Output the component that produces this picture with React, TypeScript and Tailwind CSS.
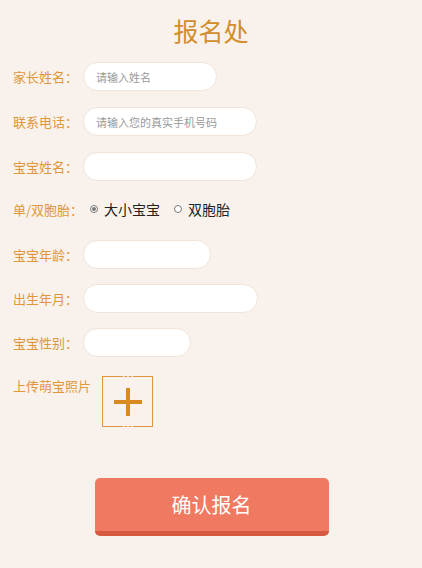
import React from 'react';

const font = { fontFamily: '"Noto Sans CJK SC", "Noto Sans", sans-serif' };

function Field({ label, width, placeholder, className = '' }: { label: string; width: string; placeholder?: string; className?: string }) {
  return (
    <div className={`flex items-center h-[29px] ${className}`}>
      <span className="text-[13px] text-[#e0973a] leading-none whitespace-nowrap">{label}</span>
      <input
        type="text"
        placeholder={placeholder}
        className={`${width} h-[29px] ml-[5px] rounded-full bg-white border border-[#f0e4d8] px-[12px] text-[11px] text-[#333] placeholder-[#9a9a9a] outline-none`}
      />
    </div>
  );
}

function Radio({ checked, label, onClick, className = '' }: { checked: boolean; label: string; onClick: () => void; className?: string }) {
  return (
    <button onClick={onClick} className={`flex items-center ${className}`}>
      <span className="w-[8px] h-[8px] rounded-full border border-[#777] flex items-center justify-center bg-white">
        {checked && <span className="w-[4px] h-[4px] rounded-full bg-[#777]" />}
      </span>
      <span className="ml-[6px] text-[14px] text-[#222] leading-none">{label}</span>
    </button>
  );
}

export default function App() {
  const [twin, setTwin] = React.useState<'big' | 'twin'>('big');

  return (
    <div className="w-[422px] h-[568px] bg-[#f9f2ec] overflow-hidden" style={font}>
      <h1 className="pt-[14px] text-center text-[25px] leading-[32px] text-[#d28d2c]">报名处</h1>

      <div className="pl-[13px] mt-[16px] flex flex-col">
        <Field label="家长姓名：" width="w-[134px]" placeholder="请输入姓名" />
        <Field label="联系电话：" width="w-[174px]" placeholder="请输入您的真实手机号码" className="mt-[16px]" />
        <Field label="宝宝姓名：" width="w-[174px]" className="mt-[16px]" />

        <div className="flex items-center h-[24px] mt-[16px]">
          <span className="text-[13px] text-[#e0973a] leading-none">单/双胞胎：</span>
          <Radio checked={twin === 'big'} label="大小宝宝" onClick={() => setTwin('big')} className="ml-[7px]" />
          <Radio checked={twin === 'twin'} label="双胞胎" onClick={() => setTwin('twin')} className="ml-[14px]" />
        </div>

        <Field label="宝宝年龄：" width="w-[128px]" className="mt-[19px]" />
        <Field label="出生年月：" width="w-[175px]" className="mt-[15px]" />
        <Field label="宝宝性别：" width="w-[108px]" className="mt-[15px]" />

        <div className="flex items-start mt-[19px]">
          <span className="text-[13px] text-[#e0973a] leading-none mt-[3px]">上传萌宝照片</span>
          <div className="relative ml-[11px] w-[51px] h-[51px] border border-[#dd9540] flex items-center justify-center">
            <span className="absolute -top-px left-[17px] w-[16px] border-t border-dashed border-[#dd9540] bg-[#f9f2ec]" />
            <span className="absolute -bottom-px left-[17px] w-[16px] border-b border-dashed border-[#dd9540] bg-[#f9f2ec]" />
            <svg width="28" height="28" viewBox="0 0 28 28">
              <path d="M14 0v28M0 14h28" stroke="#d98a22" strokeWidth="4" />
            </svg>
          </div>
        </div>
      </div>

      <div className="flex justify-center mt-[51px] pl-[1px]">
        <button className="w-[234px] h-[58px] rounded-[5px] bg-[#f07962] border-b-[5px] border-[#d65a40] text-white text-[20px] flex items-center justify-center">
          确认报名
        </button>
      </div>
    </div>
  );
}
